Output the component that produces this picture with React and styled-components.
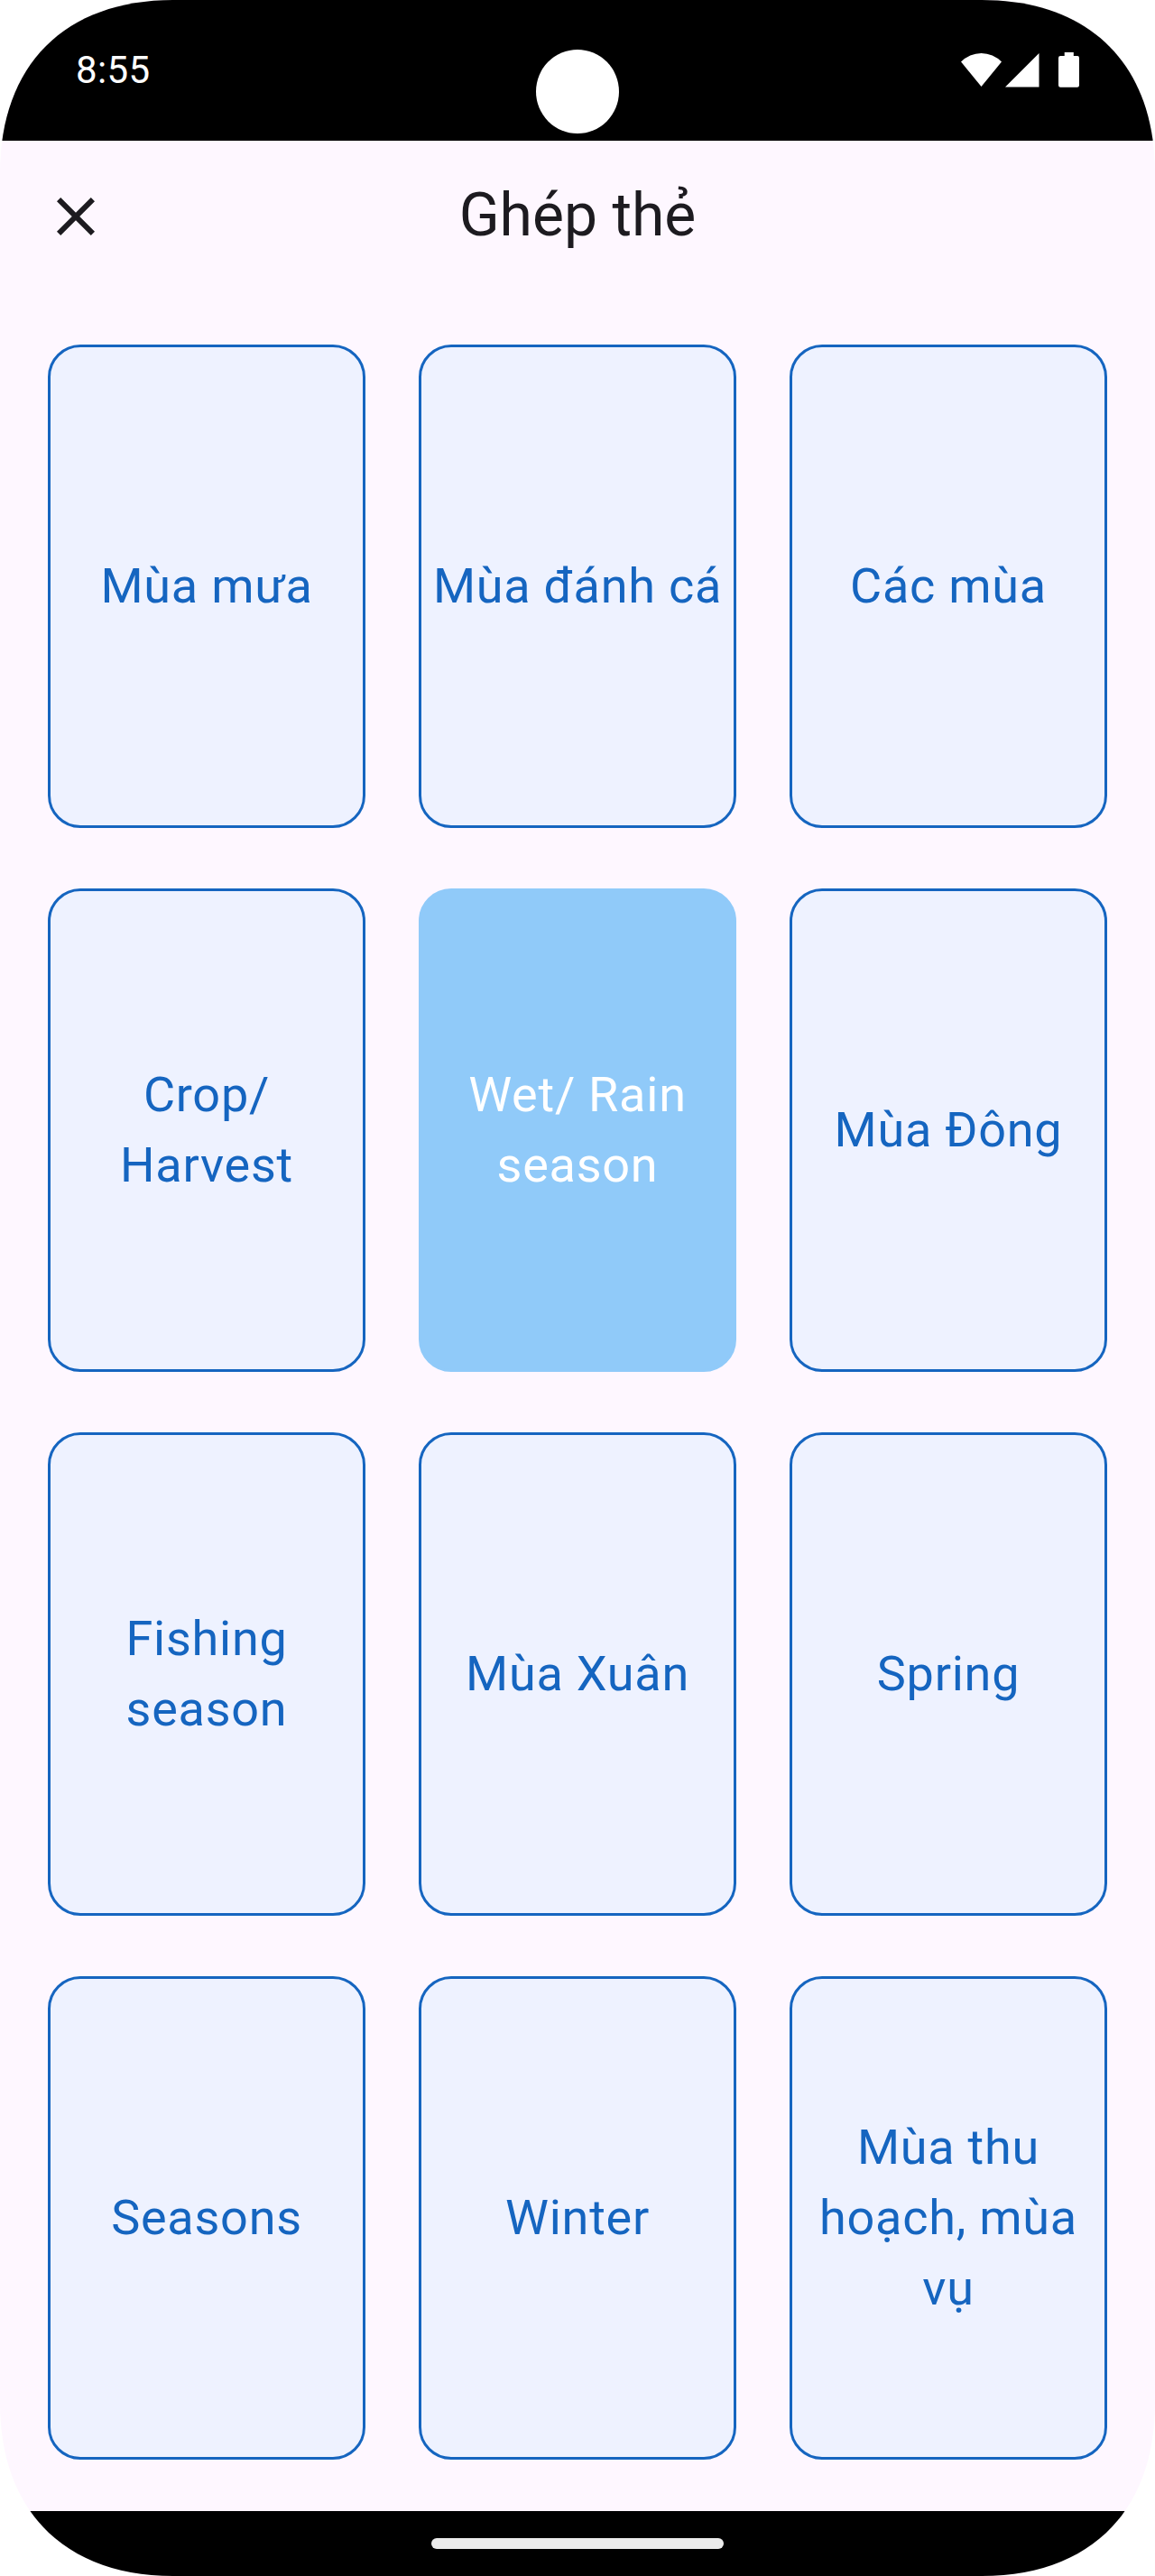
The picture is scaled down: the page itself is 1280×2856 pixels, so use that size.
import React from "react";
import styled, { createGlobalStyle } from "styled-components";

const GlobalStyle = createGlobalStyle`
  *, *::before, *::after { box-sizing: border-box; }
  body { margin: 0; background: #ffffff; }
`;

const Screen = styled.div`
  position: relative;
  display: flex;
  flex-direction: column;
  width: 1280px;
  height: 2856px;
  background: #fef7ff;
  font-family: Roboto, "Noto Sans", sans-serif;
  clip-path: path("M0 192C0 72 72 0 192 0H1088C1208 0 1280 72 1280 192V2664C1280 2784 1208 2856 1088 2856H192C72 2856 0 2784 0 2664Z");
`;

const StatusBar = styled.div`
  display: flex;
  flex: none;
  align-items: flex-start;
  justify-content: space-between;
  height: 156px;
  padding: 53px 84px 0 84px;
  background: #000000;
  color: #ffffff;
`;

const Clock = styled.span`
  font-size: 42px;
  line-height: 49px;
  letter-spacing: 0.4px;
`;

const StatusIcons = styled.div`
  display: flex;
  margin-top: 5px;
`;

const Camera = styled.div`
  position: absolute;
  top: 55px;
  left: 594px;
  width: 92px;
  height: 93px;
  border-radius: 50%;
  background: #ffffff;
`;

const AppBar = styled.header`
  display: grid;
  flex: none;
  grid-template-columns: 72px 1fr 72px;
  align-items: center;
  height: 168px;
  padding: 0 48px;
  color: #1d1b20;
`;

const CloseButton = styled.button`
  display: flex;
  padding: 0;
  border: 0;
  background: none;
  color: inherit;
`;

const Title = styled.h1`
  margin: 0;
  padding-bottom: 3px;
  font-size: 66px;
  font-weight: 400;
  line-height: 84px;
  text-align: center;
`;

const CardGrid = styled.main`
  display: grid;
  flex: 1;
  grid-template-columns: repeat(3, 352px);
  grid-auto-rows: 536px;
  align-content: start;
  gap: 67px 59px;
  padding: 58px 53px 0;
`;

const Card = styled.div`
  display: flex;
  align-items: center;
  justify-content: center;
  padding: 0 9px;
  border: 3px solid ${(p) => (p.$selected ? "#90caf9" : "#1565c0")};
  border-radius: 36px;
  background: ${(p) => (p.$selected ? "#90caf9" : "#eef2ff")};
  color: ${(p) => (p.$selected ? "#ffffff" : "#1565c0")};
  font-size: 54px;
  line-height: 78px;
  letter-spacing: 0.75px;
  text-align: center;
`;

const NavigationBar = styled.div`
  display: flex;
  flex: none;
  align-items: center;
  justify-content: center;
  height: 72px;
  background: #000000;
`;

const HomeHandle = styled.div`
  width: 324px;
  height: 12px;
  border-radius: 6px;
  background: #ebebeb;
`;

const cards = [
  "Mùa mưa",
  "Mùa đánh cá",
  "Các mùa",
  "Crop/ Harvest",
  "Wet/ Rain season",
  "Mùa Đông",
  "Fishing season",
  "Mùa Xuân",
  "Spring",
  "Seasons",
  "Winter",
  "Mùa thu hoạch, mùa vụ",
];

export default function App() {
  return (
    <>
      <GlobalStyle />
      <Screen>
        <StatusBar>
          <Clock>8:55</Clock>
          <StatusIcons>
            <svg width="131" height="40" viewBox="0 0 131 40" fill="#ffffff">
              <path d="M0 10.6A31 31 0 0 1 45 10.6L22.5 38Z" />
              <path d="M49 38.6L86.5 1V38.6Z" />
              <path d="M114.7 0H124.8V4H129Q131 4 131 6.2V36.5Q131 38.8 128.8 38.8H110.2Q108 38.8 108 36.5V6.2Q108 4 110.2 4H114.7Z" />
            </svg>
          </StatusIcons>
        </StatusBar>
        <Camera />
        <AppBar>
          <CloseButton aria-label="Close">
            <svg width="72" height="72" viewBox="0 0 24 24" fill="currentColor">
              <path d="M19 6.41L17.59 5 12 10.59 6.41 5 5 6.41 10.59 12 5 17.59 6.41 19 12 13.41 17.59 19 19 17.59 13.41 12z" />
            </svg>
          </CloseButton>
          <Title>Ghép thẻ</Title>
        </AppBar>
        <CardGrid>
          {cards.map((label) => (
            <Card key={label} $selected={label === "Wet/ Rain season"}>
              {label}
            </Card>
          ))}
        </CardGrid>
        <NavigationBar>
          <HomeHandle />
        </NavigationBar>
      </Screen>
    </>
  );
}
